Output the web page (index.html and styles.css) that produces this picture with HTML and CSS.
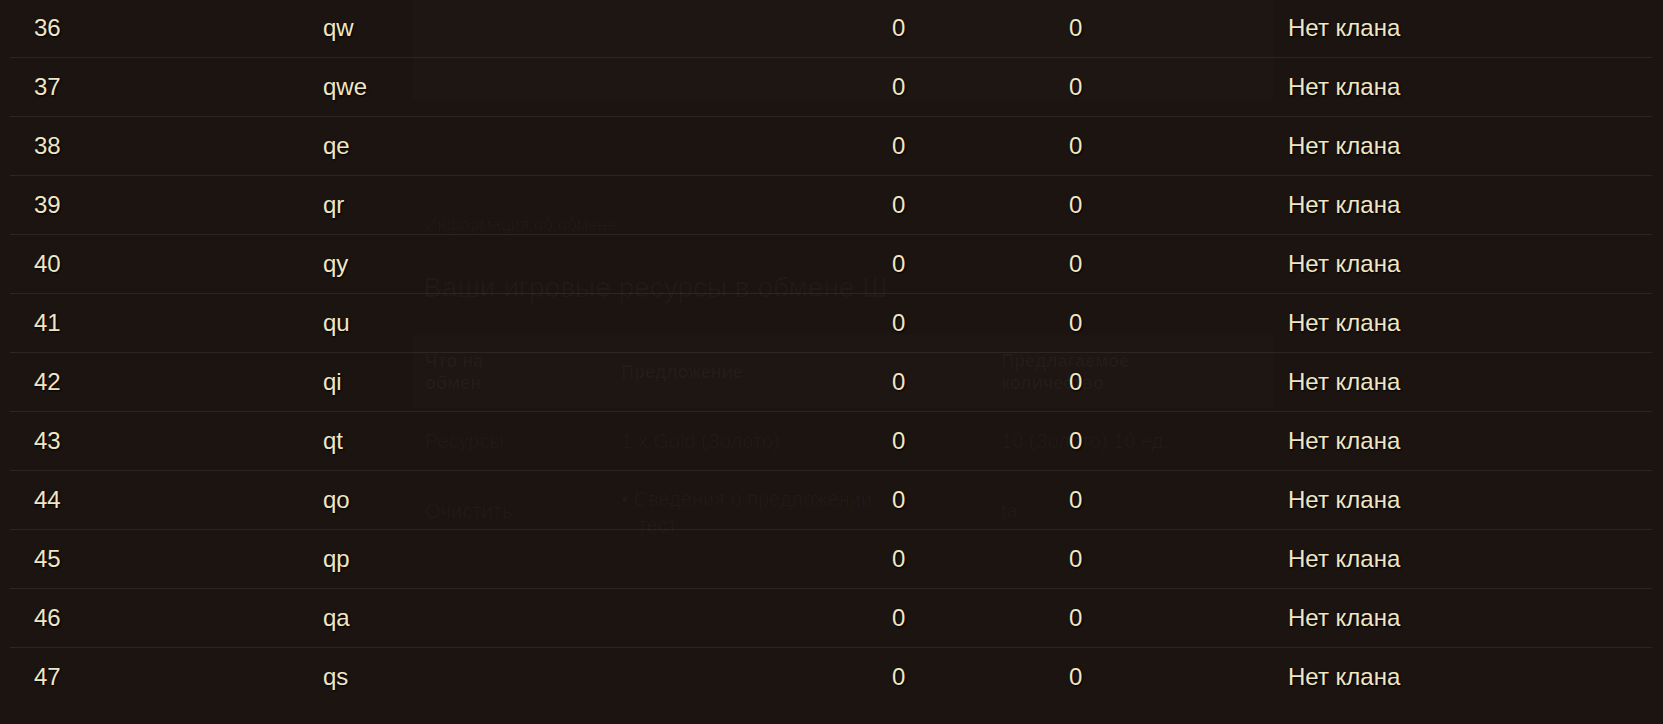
FILE: index.html
```html
<!DOCTYPE html>
<html lang="ru">
<head>
<meta charset="utf-8">
<title>Рейтинг игроков</title>
<link rel="stylesheet" href="styles.css">
</head>
<body>
<div class="page">
  <table class="rating">
    <colgroup>
      <col class="c-num"><col class="c-name"><col class="c-a"><col class="c-b"><col class="c-clan">
    </colgroup>
    <tbody>
      <tr><td>36</td><td>qw</td><td>0</td><td>0</td><td>Нет клана</td></tr>
      <tr><td>37</td><td>qwe</td><td>0</td><td>0</td><td>Нет клана</td></tr>
      <tr><td>38</td><td>qe</td><td>0</td><td>0</td><td>Нет клана</td></tr>
      <tr><td>39</td><td>qr</td><td>0</td><td>0</td><td>Нет клана</td></tr>
      <tr><td>40</td><td>qy</td><td>0</td><td>0</td><td>Нет клана</td></tr>
      <tr><td>41</td><td>qu</td><td>0</td><td>0</td><td>Нет клана</td></tr>
      <tr><td>42</td><td>qi</td><td>0</td><td>0</td><td>Нет клана</td></tr>
      <tr><td>43</td><td>qt</td><td>0</td><td>0</td><td>Нет клана</td></tr>
      <tr><td>44</td><td>qo</td><td>0</td><td>0</td><td>Нет клана</td></tr>
      <tr><td>45</td><td>qp</td><td>0</td><td>0</td><td>Нет клана</td></tr>
      <tr><td>46</td><td>qa</td><td>0</td><td>0</td><td>Нет клана</td></tr>
      <tr><td>47</td><td>qs</td><td>0</td><td>0</td><td>Нет клана</td></tr>
    </tbody>
  </table>

  <div class="ghost" aria-hidden="true">
    <div class="ghost-top"></div>
    <div class="ghost-info">Информация об обмене</div>
    <div class="ghost-title">Ваши игровые ресурсы в обмене Ш</div>
    <div class="ghost-table">
      <div class="ghost-head">
        <div>Что на<br>обмен</div>
        <div>Предложение</div>
        <div>Предлагаемое<br>количество</div>
      </div>
      <div class="ghost-row">
        <div>Ресурсы</div>
        <div>1 x Gold (Золото)</div>
        <div>10 (Золото) 10 ед.</div>
      </div>
      <div class="ghost-row">
        <div class="gr-low">Очистить</div>
        <div>• Сведения о предложении<br>&nbsp;&nbsp;&nbsp;тест</div>
        <div class="gr-low">ta</div>
      </div>
    </div>
  </div>
</div>
</body>
</html>
```

FILE: styles.css
```css
html, body {
  margin: 0;
  padding: 0;
  background: #1b1411;
}

body {
  font-family: "Liberation Sans", Arial, sans-serif;
  color: #f1e6c4;
  overflow: hidden;
}

.page {
  position: relative;
  padding: 0 11px 0 10px;
  margin-top: -1px;
}

.rating {
  width: 100%;
  border-collapse: collapse;
  table-layout: fixed;
  font-size: 24px;
}

.c-num { width: 289px; }
.c-name { width: 569px; }
.c-a { width: 177px; }
.c-b { width: 219px; }

.rating td {
  height: 58px;
  padding: 0 0 0 24px;
  line-height: 58px;
  vertical-align: middle;
  border-bottom: 1px solid #2e2522;
  text-shadow: 1px 1px 2px #000;
  white-space: nowrap;
}

.rating tr:last-child td {
  border-bottom: none;
}

/* faint fading dialog left behind the table */
.ghost {
  position: absolute;
  left: 413px;
  top: 0;
  width: 860px;
  height: 670px;
  color: rgba(241, 230, 196, 0.032);
  font-size: 19px;
  pointer-events: none;
}

.ghost-top {
  height: 100px;
  background: rgba(255, 255, 255, 0.01);
}

.ghost-info {
  margin: 116px 0 0 12px;
  font-size: 17px;
  line-height: 20px;
}

.ghost-title {
  margin: 36px 0 0 10px;
  font-size: 28px;
  line-height: 34px;
}

.ghost-table {
  margin-top: 30px;
}

.ghost-head {
  display: grid;
  grid-template-columns: 196px 380px 1fr;
  align-items: center;
  padding: 0 12px;
  height: 73px;
  background: rgba(255, 255, 255, 0.01);
  font-size: 18px;
  line-height: 22px;
  font-weight: bold;
}

.ghost-row {
  display: grid;
  grid-template-columns: 196px 380px 1fr;
  align-items: start;
  padding: 20px 12px 12px;
  font-size: 20px;
  line-height: 26px;
}

.gr-low {
  padding-top: 12px;
}
```
